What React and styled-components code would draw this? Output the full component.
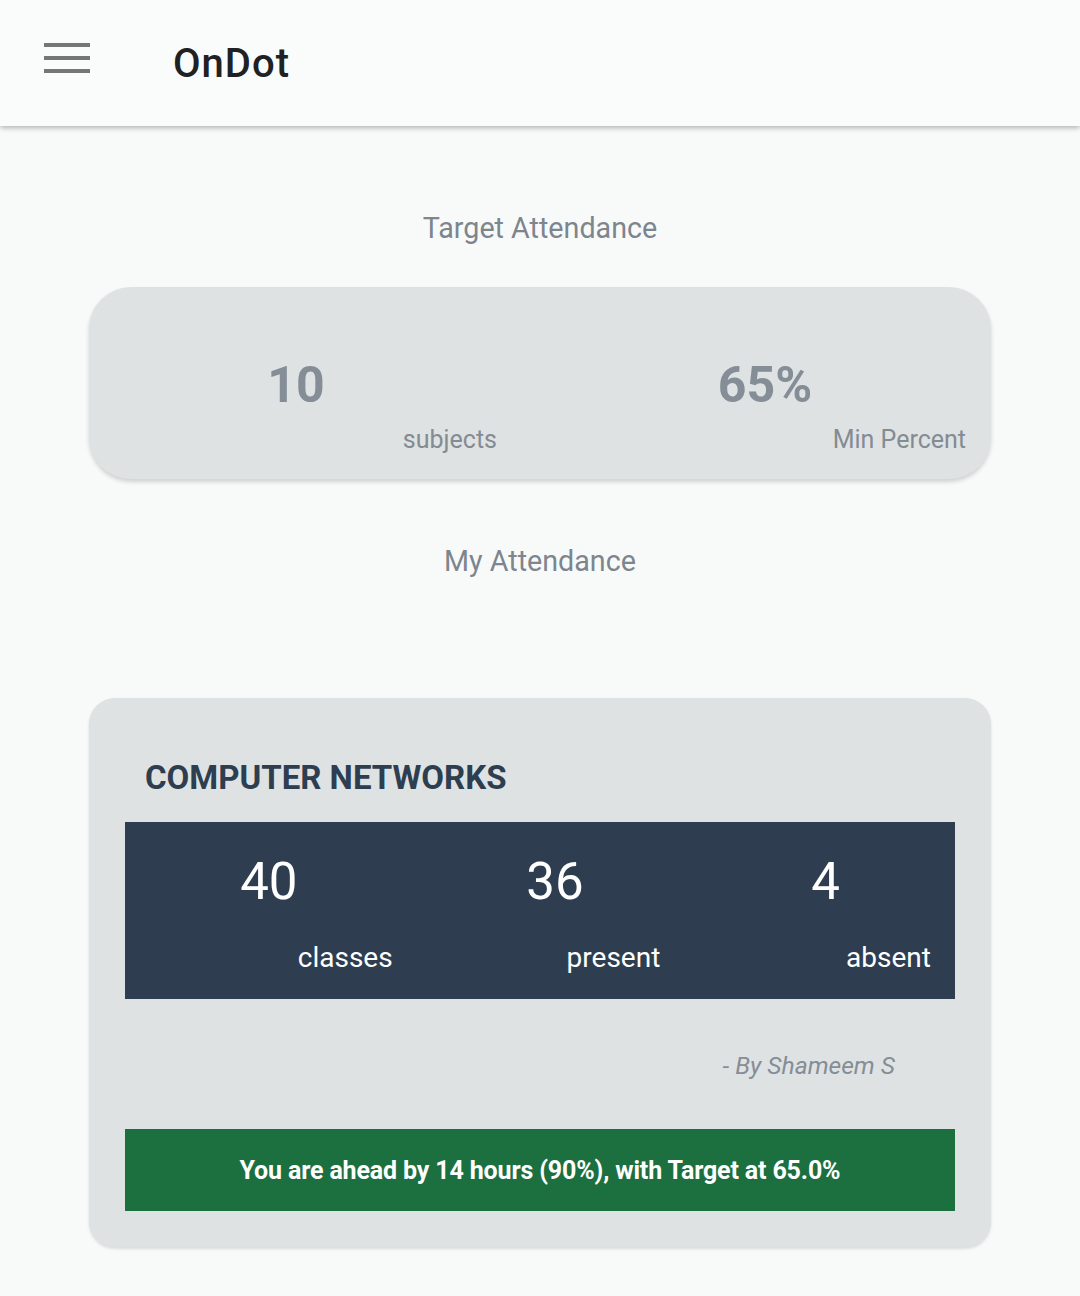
import React from 'react'
import styled, { createGlobalStyle } from 'styled-components'

const GlobalStyle = createGlobalStyle`
  html, body {
    margin: 0;
    padding: 0;
    background: #f8fafa;
    font-family: Roboto, 'Liberation Sans', sans-serif;
  }
  * { box-sizing: border-box; }
`

const Page = styled.div`
  min-height: 1296px;
  background: #f8fafa;
`

const Header = styled.header`
  height: 126px;
  background: #fafbfb;
  display: flex;
  align-items: center;
  padding-left: 44px;
  box-shadow: 0 2px 5px rgba(0, 0, 0, 0.28);
  position: relative;
`

const MenuButton = styled.div`
  width: 46px;
  display: flex;
  flex-direction: column;
  gap: 9px;
  margin-top: -10px;

  span {
    display: block;
    height: 4px;
    background: #767676;
  }
`

const Brand = styled.h1`
  margin: 0 0 0 83px;
  font-size: 40px;
  font-weight: 500;
  color: #202122;
  letter-spacing: 1px;
`

const Main = styled.main`
  padding: 0 89px;
  display: flex;
  flex-direction: column;
`

const SectionTitle = styled.h2`
  margin: 0;
  text-align: center;
  font-size: 28.7px;
  font-weight: 400;
  color: #7d858d;
  padding-top: ${p => p.top}px;
  padding-bottom: ${p => p.bottom}px;
  line-height: 34px;
`

const TargetCard = styled.section`
  height: 192px;
  background: #dfe2e3;
  border-radius: 42px;
  box-shadow: 0 3px 4px rgba(0, 0, 0, 0.16);
  display: grid;
  grid-template-columns: 1fr 1fr;
  column-gap: 69px;
  padding: 70px 25px 0 8px;
`

const TargetStat = styled.div`
  display: flex;
  flex-direction: column;
`

const TargetNumber = styled.div`
  text-align: center;
  font-size: 50px;
  font-weight: 700;
  color: #858e97;
  line-height: 56px;
  padding-right: 2px;
`

const TargetLabel = styled.div`
  text-align: right;
  font-size: 25px;
  color: #838b93;
  line-height: 30px;
  margin-top: 12px;
`

const SubjectCard = styled.section`
  background: #dfe2e3;
  border-radius: 26px;
  box-shadow: 0 2px 3px rgba(0, 0, 0, 0.12);
  padding: 58px 36px 36px;
`

const SubjectName = styled.h3`
  margin: 0 0 22px 20px;
  font-size: 33px;
  font-weight: 700;
  color: #2d3e50;
  line-height: 44px;
`

const StatsBar = styled.div`
  height: 177px;
  background: #2e3e50;
  display: grid;
  grid-template-columns: repeat(3, 1fr);
  padding-top: 32px;
`

const Stat = styled.div`
  display: flex;
  flex-direction: column;
  padding-right: ${p => p.pad}px;
`

const StatNumber = styled.div`
  text-align: center;
  font-size: 51px;
  color: #ffffff;
  line-height: 56px;
  padding-left: ${p => p.shift}px;
`

const StatLabel = styled.div`
  text-align: right;
  font-size: 28px;
  color: #ffffff;
  line-height: 34px;
  margin-top: 31px;
`

const Signature = styled.div`
  text-align: right;
  font-style: italic;
  font-size: 24.6px;
  color: #858d96;
  padding: 52px 60px 48px 0;
  line-height: 30px;
`

const StatusBar = styled.div`
  height: 82px;
  background: #1c6f3f;
  display: flex;
  align-items: center;
  justify-content: center;
  color: #ffffff;
  font-size: 25px;
  font-weight: 700;
  letter-spacing: -0.15px;
`

export default function App() {
  const stats = [
    { value: 40, label: 'classes', pad: 9, shift: 20 },
    { value: 36, label: 'present', pad: 18, shift: 48 },
    { value: 4, label: 'absent', pad: 24, shift: 42 },
  ]

  return (
    <Page>
      <GlobalStyle />
      <Header>
        <MenuButton>
          <span />
          <span />
          <span />
        </MenuButton>
        <Brand>OnDot</Brand>
      </Header>
      <Main>
        <SectionTitle top={85} bottom={42}>Target Attendance</SectionTitle>
        <TargetCard>
          <TargetStat>
            <TargetNumber>10</TargetNumber>
            <TargetLabel>subjects</TargetLabel>
          </TargetStat>
          <TargetStat>
            <TargetNumber>65%</TargetNumber>
            <TargetLabel>Min Percent</TargetLabel>
          </TargetStat>
        </TargetCard>
        <SectionTitle top={65} bottom={120}>My Attendance</SectionTitle>
        <SubjectCard>
          <SubjectName>COMPUTER NETWORKS</SubjectName>
          <StatsBar>
            {stats.map(s => (
              <Stat key={s.label} pad={s.pad}>
                <StatNumber shift={s.shift}>{s.value}</StatNumber>
                <StatLabel>{s.label}</StatLabel>
              </Stat>
            ))}
          </StatsBar>
          <Signature>- By Shameem S</Signature>
          <StatusBar>You are ahead by 14 hours (90%), with Target at 65.0%</StatusBar>
        </SubjectCard>
      </Main>
    </Page>
  )
}
